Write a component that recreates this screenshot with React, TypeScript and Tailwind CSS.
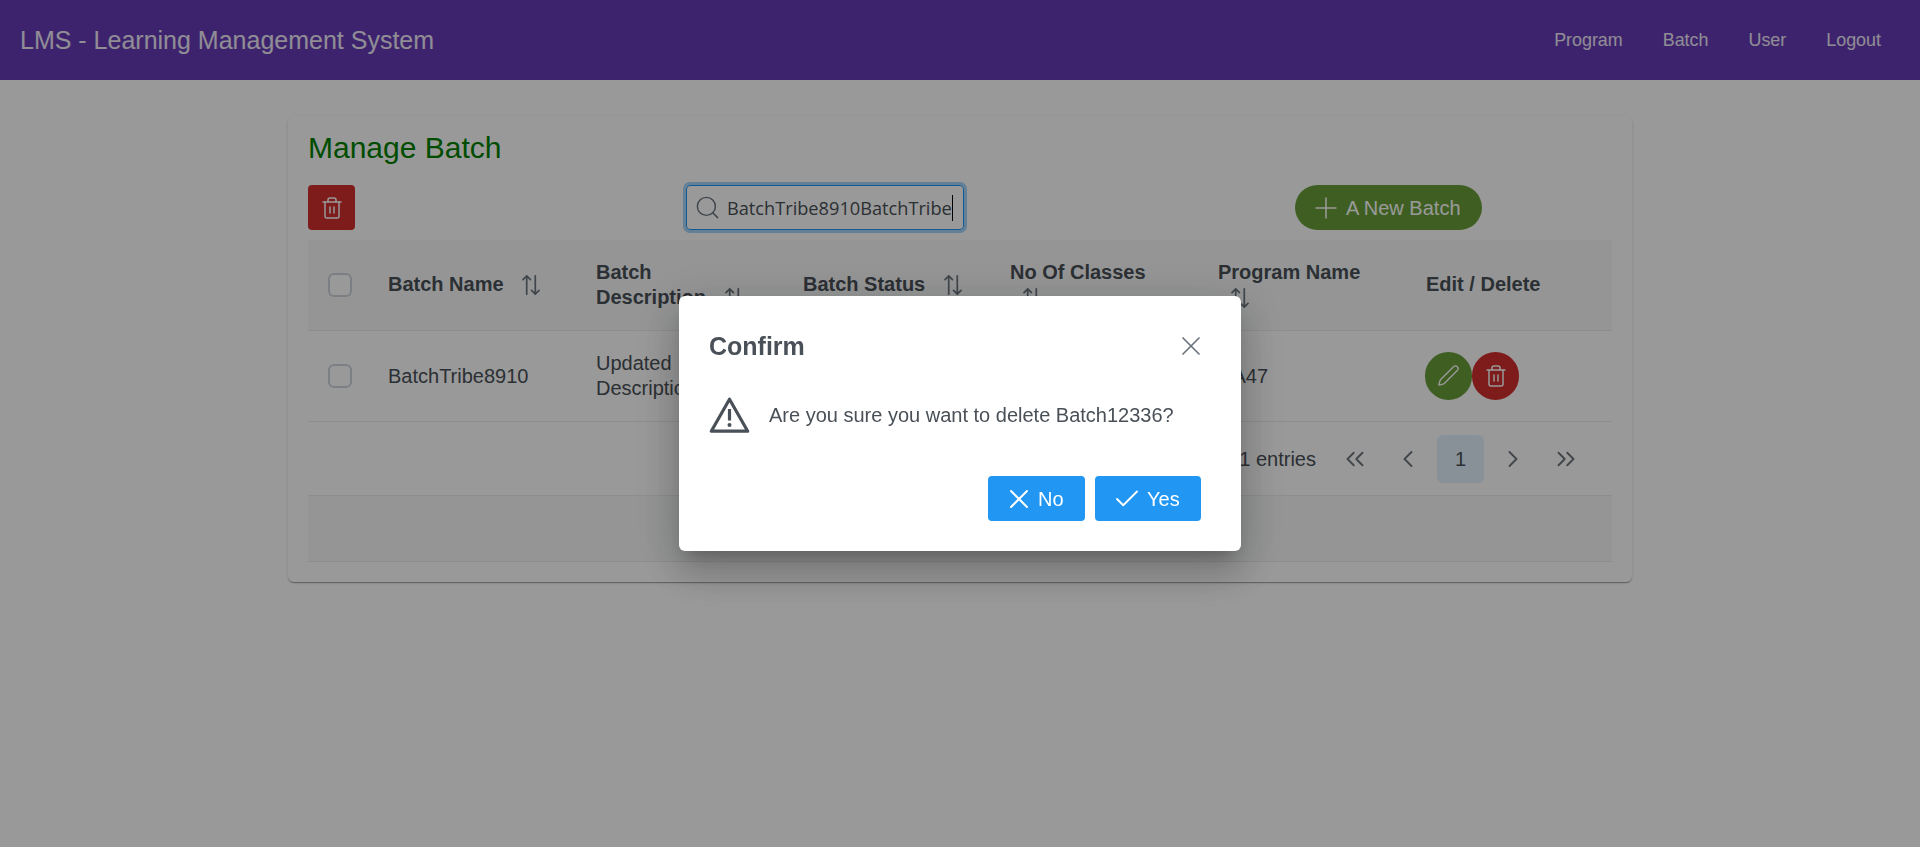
import { Check, ChevronLeft, ChevronRight, ChevronsLeft, ChevronsRight, Pen, Plus, Search, Trash2, X } from 'lucide-react';

const navLinks = ['Program', 'Batch', 'User', 'Logout'];

function SortIcon() {
  return (
    <svg viewBox="0 0 14 14" fill="none" stroke="#6c757d" strokeWidth="1.2" strokeLinecap="round" strokeLinejoin="round" className="ml-3 inline-block size-5 align-[-4px]">
      <path d="M4 13.4V.6M1.4 3.2 4 .6l2.6 2.6" />
      <path d="M10 .6v12.8M7.4 10.8l2.6 2.6 2.6-2.6" />
    </svg>
  );
}

function WarningIcon() {
  return (
    <svg viewBox="0 0 41 37" fill="none" className="h-[37px] w-[41px] shrink-0" stroke="#495057" strokeWidth="3.2">
      <path d="M20.5 3.2 2.3 35.2h36.4z" strokeLinejoin="round" />
      <path d="M20.5 13v11.5" />
      <circle cx="20.5" cy="29" r="2" fill="#495057" stroke="none" />
    </svg>
  );
}

export default function App() {
  return (
    <div className="relative min-h-[847px] bg-white font-['Liberation_Sans',Arial,sans-serif] text-[20px] text-[#495057]">
      <header className="flex h-20 items-center justify-between bg-[#673ab7] pl-[20px] pr-[39px] text-white/90">
        <span className="pt-[2px] text-[25px]">LMS - Learning Management System</span>
        <nav className="flex gap-10 text-[17.9px]">
          {navLinks.map((link) => (
            <a key={link}>{link}</a>
          ))}
        </nav>
      </header>

      <main className="mx-auto mt-9 h-[466px] w-[1344px] rounded-md bg-white p-5 shadow-[0_2px_1px_-1px_rgba(0,0,0,0.2),0_1px_1px_0_rgba(0,0,0,0.14),0_1px_3px_0_rgba(0,0,0,0.12)]">
        <h1 className="text-[30px] leading-[24px] text-[#008000]">Manage Batch</h1>

        <div className="mt-[25px] flex h-[45px] items-center">
          <button className="flex h-[45px] w-[47px] items-center justify-center rounded bg-[#d32f2f] text-white">
            <Trash2 className="size-[24px]" strokeWidth={1.5} />
          </button>
          <div className="relative ml-[331px] h-[45px] w-[278px]">
            <Search className="absolute left-[8px] top-[9px] size-[27px] text-[#6c757d]" strokeWidth={1.3} />
            <input
              readOnly
              value="BatchTribe8910BatchTribe"
              className="h-full w-full rounded border border-[#2196f3] pl-[40px] pr-[10px] font-['Open_Sans',sans-serif] text-[18.2px] text-[#495057] shadow-[0_0_0_3px_#a6d5fa] outline-none"
            />
            <span className="absolute left-[266px] top-[10px] h-[26px] w-px bg-black" />
          </div>
          <button className="ml-[331px] flex h-[45px] w-[187px] items-center gap-[3px] rounded-full bg-[#689f38] pl-[14px] text-white">
            <Plus className="size-[34px]" strokeWidth={1.1} />
            A New Batch
          </button>
        </div>

        <table className="mt-[10px] w-full table-fixed border-collapse text-left">
          <colgroup>
            <col className="w-[64px]" />
            <col className="w-[208px]" />
            <col className="w-[207px]" />
            <col className="w-[207px]" />
            <col className="w-[208px]" />
            <col className="w-[208px]" />
            <col />
          </colgroup>
          <thead>
            <tr className="h-[90px] border-b border-[#e9ecef] bg-[#f8f9fa] leading-[25px]">
              <th className="px-5">
                <span className="block size-[24px] rounded-md border-2 border-[#ced4da] bg-white" />
              </th>
              <th className="px-4 font-bold">Batch Name <SortIcon /></th>
              <th className="px-4 font-bold">Batch<br />Description <SortIcon /></th>
              <th className="px-4 font-bold">Batch Status <SortIcon /></th>
              <th className="px-4 font-bold">No Of Classes<br /><SortIcon /></th>
              <th className="px-4 font-bold">Program Name<br /><SortIcon /></th>
              <th className="px-4 font-bold">Edit / Delete</th>
            </tr>
          </thead>
          <tbody>
            <tr className="h-[91px] border-b border-[#e9ecef] leading-[25px]">
              <td className="px-5">
                <span className="block size-[24px] rounded-md border-2 border-[#ced4da] bg-white" />
              </td>
              <td className="px-4 pt-[2px]">BatchTribe8910</td>
              <td className="px-4">Updated Description</td>
              <td className="px-4 pt-[2px]">Active</td>
              <td className="px-4 pt-[2px]">5</td>
              <td className="px-4 pt-[2px]">DA47</td>
              <td className="px-4">
                <div className="-ml-px flex">
                  <button className="flex h-[48px] w-[47px] items-center justify-center rounded-full bg-[#689f38] text-white">
                    <Pen className="size-[23px]" strokeWidth={1.4} />
                  </button>
                  <button className="flex h-[48px] w-[47px] items-center justify-center rounded-full bg-[#d32f2f] text-white">
                    <Trash2 className="size-[24px]" strokeWidth={1.5} />
                  </button>
                </div>
              </td>
            </tr>
          </tbody>
        </table>

        <div className="flex h-[73px] items-center justify-end pr-[22px] pt-[2px] text-[#6c757d]">
          <span className="mr-[15px] text-[#495057]">Showing 1 to 1 of 1 entries</span>
          <button className="flex h-[48px] w-[48px] items-center justify-center"><ChevronsLeft className="size-[30px]" strokeWidth={1.5} /></button>
          <button className="ml-[5px] flex h-[48px] w-[48px] items-center justify-center"><ChevronLeft className="size-[28px]" strokeWidth={1.6} /></button>
          <button className="ml-[5px] flex h-[48px] w-[47px] items-center justify-center rounded-md bg-[#e3f2fd] text-[#495057]">1</button>
          <button className="ml-[5px] flex h-[48px] w-[48px] items-center justify-center"><ChevronRight className="size-[28px]" strokeWidth={1.6} /></button>
          <button className="ml-[5px] flex h-[48px] w-[48px] items-center justify-center"><ChevronsRight className="size-[30px]" strokeWidth={1.5} /></button>
        </div>

        <div className="h-[67px] border-y border-[#e9ecef] bg-[#f8f9fa]" />
      </main>

      {/* confirm dialog */}
      <div className="fixed inset-0 flex items-center justify-center bg-black/40">
        <div className="h-[255px] w-[562px] rounded-md bg-white px-[30px] shadow-[0_11px_15px_-7px_rgba(0,0,0,0.2),0_24px_38px_3px_rgba(0,0,0,0.14),0_9px_46px_8px_rgba(0,0,0,0.12)]">
          <div className="flex h-[100px] items-center justify-between">
            <span className="pt-[2px] text-[25px] font-bold">Confirm</span>
            <X className="mr-[4px] size-[32px] text-[#6c757d]" strokeWidth={1.3} />
          </div>
          <div className="flex h-[36px] items-center gap-[19px]">
            <WarningIcon />
            <span className="pt-[2px]">Are you sure you want to delete Batch12336?</span>
          </div>
          <div className="mt-[44px] flex justify-end gap-[10px] pr-[10px]">
            <button className="flex h-[45px] w-[97px] items-center gap-[3px] rounded bg-[#2196f3] pl-[15px] text-white">
              <X className="size-[32px]" strokeWidth={1.5} />
              No
            </button>
            <button className="flex h-[45px] w-[106px] items-center gap-[5px] rounded bg-[#2196f3] pl-[17px] text-white">
              <Check className="size-[30px]" strokeWidth={1.5} />
              Yes
            </button>
          </div>
        </div>
      </div>
    </div>
  );
}
